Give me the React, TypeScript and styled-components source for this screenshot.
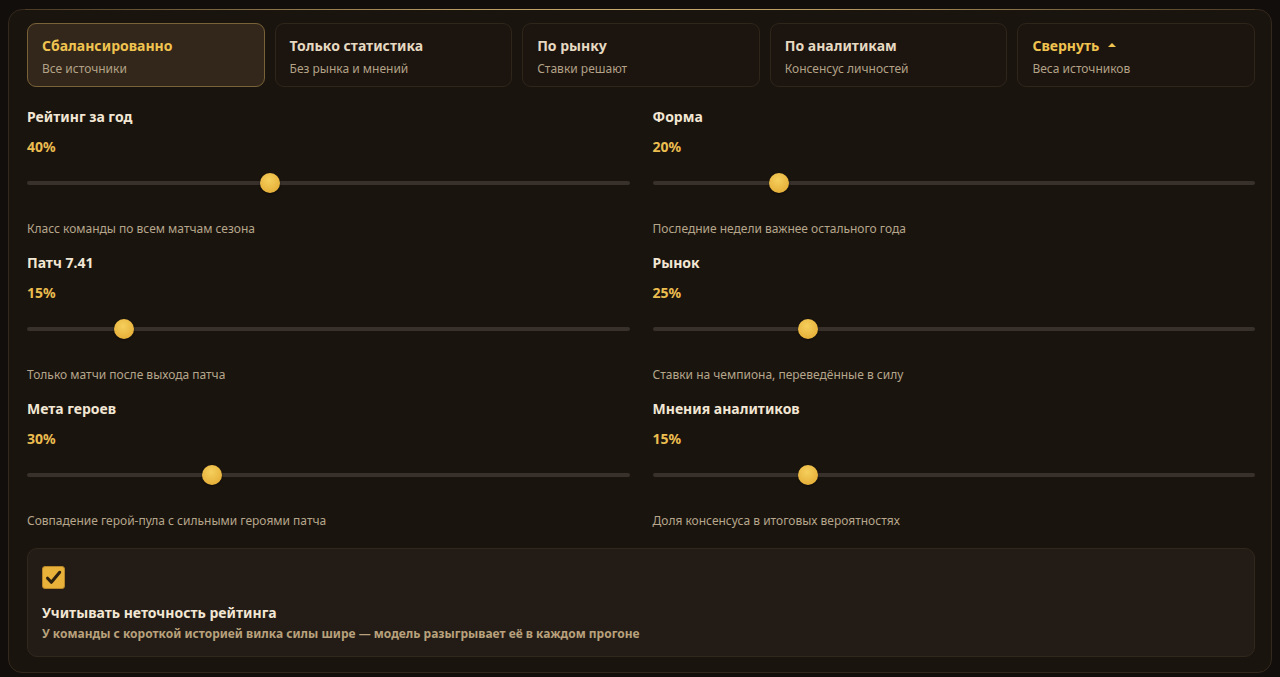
import * as React from 'react';
import styled, { createGlobalStyle } from 'styled-components';

const GlobalStyle = createGlobalStyle`
  html, body {
    margin: 0;
    background: #120e0b;
  }
  body {
    font-family: 'Noto Sans', 'Open Sans', sans-serif;
  }
`;

const Panel = styled.div`
  position: relative;
  box-sizing: border-box;
  margin: 9px 8px 0;
  height: 664px;
  padding: 13px 16px 16px 18px;
  border: 1px solid #33291d;
  border-radius: 14px;
  background: #1a140f;

  &::before {
    content: '';
    position: absolute;
    top: -1px;
    left: 16px;
    right: 16px;
    height: 1px;
    background: linear-gradient(90deg, rgba(168, 132, 72, 0.2), #b89a62 35%, #c9ac70 50%, #b89a62 65%, rgba(168, 132, 72, 0.2));
  }
`;

const Presets = styled.div`
  display: grid;
  grid-template-columns: repeat(5, 1fr);
  gap: 10px;
`;

const Preset = styled.button<{ $active?: boolean }>`
  box-sizing: border-box;
  height: 64px;
  padding: 2px 14px 0;
  display: flex;
  flex-direction: column;
  justify-content: center;
  align-items: flex-start;
  gap: 6px;
  border-radius: 9px;
  border: 1px solid ${(p) => (p.$active ? '#7a6238' : '#2f261b')};
  background: ${(p) => (p.$active ? '#32271a' : '#1b140f')};
  font-family: inherit;
  cursor: pointer;
  text-align: left;
`;

const PresetTitle = styled.span<{ $gold?: boolean }>`
  display: flex;
  align-items: center;
  gap: 9px;
  font-size: 14px;
  font-weight: 700;
  line-height: 18px;
  color: ${(p) => (p.$gold ? '#f0c350' : '#e6d9c2')};
`;

const Caret = styled.span`
  width: 0;
  height: 0;
  border-left: 4px solid transparent;
  border-right: 4px solid transparent;
  border-bottom: 4px solid #f0c350;
  margin-top: -2px;
`;

const PresetHint = styled.span`
  font-size: 12px;
  line-height: 15px;
  color: #b3a287;
`;

const Weights = styled.div`
  display: grid;
  grid-template-columns: 1fr 1fr;
  column-gap: 23px;
  row-gap: 16px;
  margin-top: 20px;
`;

const Weight = styled.div`
  display: flex;
  flex-direction: column;
`;

const WeightName = styled.div`
  font-size: 14px;
  font-weight: 700;
  line-height: 20px;
  color: #f2e7d4;
`;

const WeightValue = styled.div`
  margin-top: 10px;
  font-size: 14px;
  font-weight: 700;
  line-height: 20px;
  color: #ebbd4f;
`;

const Range = styled.input`
  -webkit-appearance: none;
  appearance: none;
  display: block;
  width: 100%;
  height: 20px;
  margin: 16px 0 0;
  padding: 0;
  background: transparent;
  cursor: pointer;

  &::-webkit-slider-runnable-track {
    height: 4px;
    border-radius: 2px;
    background: #38302a;
  }

  &::-webkit-slider-thumb {
    -webkit-appearance: none;
    width: 20px;
    height: 20px;
    margin-top: -8px;
    border-radius: 50%;
    border: none;
    background: radial-gradient(circle at 45% 35%, #f6cf5c, #e6b23c 70%, #d9a232);
    box-shadow: 0 1px 2px rgba(0, 0, 0, 0.5);
  }
`;

const WeightHint = styled.div`
  margin-top: 28px;
  font-size: 12px;
  line-height: 16px;
  color: #b6a68b;
`;

const Option = styled.label`
  box-sizing: border-box;
  display: flex;
  flex-direction: column;
  align-items: flex-start;
  margin-top: 19px;
  height: 109px;
  padding: 17px 14px 0;
  border: 1px solid #30271d;
  border-radius: 10px;
  background: #231c16;
  cursor: pointer;
`;

const CheckBox = styled.span`
  box-sizing: border-box;
  width: 23px;
  height: 23px;
  border-radius: 3px;
  border: 1px solid #b7862a;
  background: #e8b23a;
  display: flex;
  align-items: center;
  justify-content: center;
`;

const OptionTitle = styled.div`
  margin-top: 15px;
  font-size: 14px;
  font-weight: 700;
  line-height: 18px;
  color: #f2e7d4;
`;

const OptionHint = styled.div`
  margin-top: 4px;
  font-size: 12px;
  font-weight: 700;
  line-height: 16px;
  color: #b8a17c;
`;

const presets = [
  { title: 'Сбалансированно', hint: 'Все источники', active: true },
  { title: 'Только статистика', hint: 'Без рынка и мнений' },
  { title: 'По рынку', hint: 'Ставки решают' },
  { title: 'По аналитикам', hint: 'Консенсус личностей' },
];

// max differs per source: analyst opinions are capped lower than the rest
const weights = [
  { name: 'Рейтинг за год', value: 40, max: 100, hint: 'Класс команды по всем матчам сезона' },
  { name: 'Форма', value: 20, max: 100, hint: 'Последние недели важнее остального года' },
  { name: 'Патч 7.41', value: 15, max: 100, hint: 'Только матчи после выхода патча' },
  { name: 'Рынок', value: 25, max: 100, hint: 'Ставки на чемпиона, переведённые в силу' },
  { name: 'Мета героев', value: 30, max: 100, hint: 'Совпадение герой-пула с сильными героями патча' },
  { name: 'Мнения аналитиков', value: 15, max: 60, hint: 'Доля консенсуса в итоговых вероятностях' },
];

export default function App() {
  const [values, setValues] = React.useState(weights.map((w) => w.value));
  const [fuzzy, setFuzzy] = React.useState(true);

  return (
    <>
      <GlobalStyle />
      <Panel>
        <Presets>
          {presets.map((p) => (
            <Preset key={p.title} $active={p.active}>
              <PresetTitle $gold={p.active}>{p.title}</PresetTitle>
              <PresetHint>{p.hint}</PresetHint>
            </Preset>
          ))}
          <Preset>
            <PresetTitle $gold>
              Свернуть
              <Caret />
            </PresetTitle>
            <PresetHint>Веса источников</PresetHint>
          </Preset>
        </Presets>

        <Weights>
          {weights.map((w, i) => (
            <Weight key={w.name}>
              <WeightName>{w.name}</WeightName>
              <WeightValue>{values[i]}%</WeightValue>
              <Range
                type="range"
                min={0}
                max={w.max}
                value={values[i]}
                onChange={(e) => {
                  const next = [...values];
                  next[i] = Number(e.target.value);
                  setValues(next);
                }}
              />
              <WeightHint>{w.hint}</WeightHint>
            </Weight>
          ))}
        </Weights>

        <Option onClick={() => setFuzzy(!fuzzy)}>
          <CheckBox>
            {fuzzy && (
              <svg width="19" height="19" viewBox="0 0 16 16">
                <path d="M3 8.6l3.2 3.4L13.2 3.6" fill="none" stroke="#2b1f10" strokeWidth="2.6" strokeLinecap="round" strokeLinejoin="round" />
              </svg>
            )}
          </CheckBox>
          <OptionTitle>Учитывать неточность рейтинга</OptionTitle>
          <OptionHint>У команды с короткой историей вилка силы шире — модель разыгрывает её в каждом прогоне</OptionHint>
        </Option>
      </Panel>
    </>
  );
}
